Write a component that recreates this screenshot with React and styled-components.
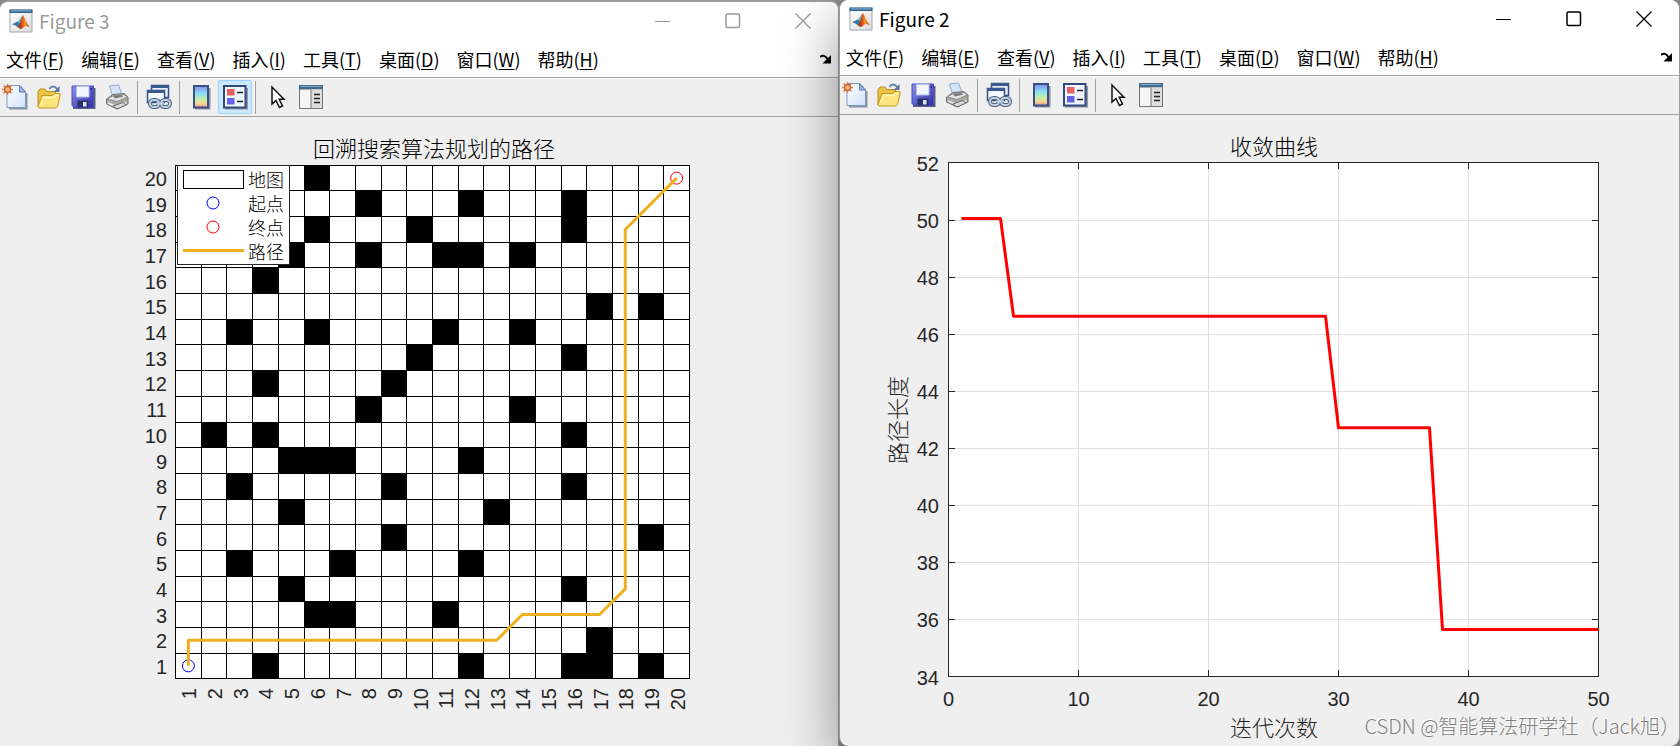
import React from "react";
import styled, { createGlobalStyle } from "styled-components";

const GlobalStyle = createGlobalStyle`
  * {
    box-sizing: border-box;
  }

  body {
    margin: 0;
    background-color: #8c8c8c;
    font-family: "Noto Sans CJK SC", sans-serif;
    overflow-x: hidden;
  }
`;

const Desktop = styled.main`
  position: relative;
  display: grid;
  grid-template-columns: 839fr 841fr;
  min-height: 100vh;
  overflow: hidden;
  background: #8c8c8c;
`;

const Window = styled.section`
  display: flex;
  flex-direction: column;
  min-width: 0;
  overflow: hidden;
  background-color: #efefef;
  color: #000;
  border: 0 solid #9c9c9c;
  border-width: ${({ $active }) => ($active ? "0 1px" : "2px 1px 0 0")};
  border-radius: ${({ $active }) => ($active ? "9px" : "9px 9px 0 0")};
  position: relative;
  z-index: ${({ $active }) => ($active ? 1 : 0)};
  box-shadow: ${({ $active }) =>
    $active ? "0 20px 56px rgba(0, 0, 0, 0.42)" : "none"};
`;

const TitleBar = styled.header`
  display: flex;
  align-items: center;
  height: 38px;
  padding-left: 9px;
  gap: 6px;
  background-color: #fff;
  color: ${({ $active }) => ($active ? "#000" : "#999")};
`;

const Title = styled.h1`
  flex: 1;
  margin: 0;
  font-size: 19px;
  line-height: 24px;
  font-weight: 400;
`;

const WindowButton = styled.button`
  display: flex;
  align-items: center;
  justify-content: center;
  width: 70px;
  height: 38px;
  margin-left: -6px;
  padding: 0;
  border: none;
  background: none;
  color: inherit;

  & + & {
    margin-left: -6px;
  }
`;

const MenuBar = styled.nav`
  display: flex;
  align-items: center;
  gap: 17px;
  height: 38px;
  padding: 1px 6px 0;
  background-color: #fff;
  border-bottom: 1px solid #a0a0a0;
`;

const MenuItem = styled.button`
  padding: 0;
  border: none;
  background: none;
  color: #000;
  font-family: inherit;
  font-size: 18px;
  line-height: 24px;
  font-weight: 400;
  white-space: nowrap;

  u {
    text-underline-offset: 2px;
    text-decoration-thickness: 1px;
  }
`;

const DockButton = styled.button`
  display: flex;
  margin-left: auto;
  padding: 0;
  border: none;
  background: none;
`;

const ToolBar = styled.div`
  display: flex;
  align-items: center;
  height: 39px;
  margin-left: -2px;
  border-bottom: 1px solid #a0a0a0;
  box-shadow: inset 0 1px #fff;
`;

const ToolButton = styled.button`
  display: flex;
  align-items: center;
  justify-content: center;
  width: 34px;
  height: 34px;
  padding: 0;
  border: 1px solid ${({ $pressed }) => ($pressed ? "#99d1ff" : "transparent")};
  border-radius: 2px;
  background-color: ${({ $pressed }) => ($pressed ? "#cce8ff" : "transparent")};
`;

const Separator = styled.span`
  width: 1px;
  height: 33px;
  margin: 0 4px 0 3px;
  background-color: #a0a0a0;
`;

const Chart = styled.svg`
  display: block;
  width: 100%;
  height: auto;
  font-family: "Liberation Sans", "Noto Sans CJK SC", sans-serif;
  font-size: 20px;
  fill: #262626;
`;

const Caption = styled.text`
  font-size: 22px;
  font-weight: 300;
  text-anchor: middle;
  fill: ${({ $dark }) => ($dark ? "#000" : "#262626")};
`;

const LegendText = styled.text`
  font-size: 18px;
  font-weight: 300;
  fill: #000;
`;

const Watermark = styled.p`
  position: absolute;
  right: 0;
  bottom: 6px;
  z-index: 2;
  margin: 0;
  font-size: 20px;
  line-height: 28px;
  font-weight: 300;
  color: #808080;
  text-shadow: -1px -1px #fff;
`;

const MatlabIcon = () => (
  <svg width="24" height="24" viewBox="0 0 24 24">
    <defs>
      <linearGradient id="peak" x1="0" x2="1">
        <stop offset="0" stopColor="#7a1d10" />
        <stop offset="0.45" stopColor="#e8601c" />
        <stop offset="0.65" stopColor="#f59a2c" />
        <stop offset="1" stopColor="#b32d14" />
      </linearGradient>
      <linearGradient id="frame" x1="0" y1="0" x2="1" y2="1">
        <stop offset="0" stopColor="#fff" />
        <stop offset="1" stopColor="#dcdcdc" />
      </linearGradient>
    </defs>
    <rect x="1" y="1" width="22" height="22" fill="url(#frame)" stroke="#a2a8ac" />
    <rect x="0.5" y="0.5" width="23" height="3.5" fill="#336490" />
    <rect x="2" y="1.3" width="20" height="1.2" fill="#7eacc9" />
    <path d="M3 15.2 L8.6 12.6 L11.2 14.6 L8.6 18.2 L6.6 16.4Z" fill="#3477ad" />
    <path d="M8.6 12.6 C10.5 11.8 12 7.5 14 6 L11.2 14.6Z" fill="#56b0c5" />
    <path d="M8.6 18.2 C10.5 16.6 12.2 10 14 6 C16 9 17.8 15 20.6 18 C18.5 17.4 17.4 16.2 15.7 17.5 C14.3 18.6 13.2 20 11.6 20 C10.7 20 10 18.6 8.6 18.2Z" fill="url(#peak)" />
  </svg>
);

const NewIcon = () => (
  <svg width="26" height="26" viewBox="0 0 26 26">
    <defs>
      <linearGradient id="page" x1="0" y1="0" x2="1" y2="1">
        <stop offset="0" stopColor="#fff" />
        <stop offset="1" stopColor="#cfe2fb" />
      </linearGradient>
    </defs>
    <path d="M7 24.5H24.5V9" fill="none" stroke="#8a92a0" strokeWidth="2" />
    <path d="M5 1.5H18L23.5 7.5V23.5H5Z" fill="url(#page)" stroke="#7b97c6" />
    <path d="M17.5 1.5V8H23.5Z" fill="#9cb9e5" stroke="#647eb2" />
    <path d="M5.5 0V11M0 5.5H11M1.5 1.5L9.5 9.5M9.5 1.5L1.5 9.5" stroke="#de8056" strokeWidth="1.3" />
    <circle cx="5.5" cy="5.5" r="3" fill="#f7bc78" stroke="#d35f32" strokeWidth="1.4" />
  </svg>
);

const OpenIcon = () => (
  <svg width="26" height="26" viewBox="0 0 26 26">
    <path d="M2 23V7.5L4 5H9L11 7.5H19.5V11" fill="#eac348" stroke="#b98d1d" />
    <path d="M2 22.5L6 11.5H17L19 9.5H24V12L21.5 22.5L20 24H3Z" fill="#fbe47c" stroke="#c59922" />
    <path d="M5 21L8 13.5H17.5L19.5 11.5H22" fill="none" stroke="#fff6bd" strokeWidth="1.5" />
    <path d="M13.5 5C15 1.8 19 1.5 21 5" fill="none" stroke="#6785a7" strokeWidth="1.8" />
    <path d="M23.5 2V8H17.5Z" fill="#5b7899" />
  </svg>
);

const SaveIcon = () => (
  <svg width="26" height="26" viewBox="0 0 26 26">
    <defs>
      <linearGradient id="disk" x1="0" y1="0" x2="1" y2="1">
        <stop offset="0" stopColor="#8d92ea" />
        <stop offset="1" stopColor="#2c2da4" />
      </linearGradient>
    </defs>
    <path d="M3 24H24.5V4" fill="none" stroke="#5d5f78" strokeWidth="2" />
    <path d="M2 2H23.5V23.5H4L2 21.5Z" fill="url(#disk)" stroke="#4b4ebd" />
    <path d="M6.5 2.5H19V13H6.5Z" fill="#f1f5ff" stroke="#b8c0ef" />
    <path d="M20.5 4H22V6H20.5Z" fill="#22237e" />
    <path d="M7.5 16.5H18.5V23.5H7.5Z" fill="#28306d" />
    <path d="M13 18H16.5V22.5H13Z" fill="#dfe5ef" />
  </svg>
);

const PrintIcon = () => (
  <svg width="26" height="26" viewBox="0 0 26 26">
    <path d="M5.5 2L14.5 1L18.5 12L9 14Z" fill="#d3e5fb" stroke="#91aac9" />
    <path d="M2.5 15L9 10.5L20 9.5L24 13V20L13 25L2.5 20Z" fill="#aaa" stroke="#737373" />
    <path d="M3 15L9.5 11.5L20 10.5L23.5 13L13 17.5Z" fill="#e3e3e3" stroke="#8c8c8c" />
    <path d="M9 12L17.5 11L19 12.5L11 14.5Z" fill="#777" />
    <path d="M4 19L13 22.8L22.5 18.5" fill="none" stroke="#eee" strokeWidth="1.5" />
    <path d="M9 22L19 18.5L22 21L13 25Z" fill="#ddd" stroke="#686868" />
    <circle cx="21.5" cy="15" r="1" fill="#cba14d" />
  </svg>
);

const LinkIcon = () => (
  <svg width="26" height="26" viewBox="0 0 26 26">
    <rect x="5.5" y="1.5" width="17" height="12" fill="#e4edf8" stroke="#344f80" strokeWidth="1.5" />
    <path d="M5 2.5H23" stroke="#39598f" strokeWidth="3" />
    <rect x="1.5" y="6.5" width="17" height="12" fill="#f5f9ff" stroke="#344f80" strokeWidth="1.5" />
    <path d="M1 7.5H19" stroke="#39598f" strokeWidth="3" />
    <g fill="none" stroke="#4d647f" strokeWidth="4">
      <rect x="4" y="16" width="9" height="7" rx="3.5" />
      <rect x="15" y="16" width="9" height="7" rx="3.5" />
      <path d="M10 19.5H18" />
    </g>
    <g fill="none" stroke="#bfd0e4" strokeWidth="2">
      <rect x="4" y="16" width="9" height="7" rx="3.5" />
      <rect x="15" y="16" width="9" height="7" rx="3.5" />
      <path d="M10 19.5H18" />
    </g>
  </svg>
);

const ColorbarIcon = () => (
  <svg width="26" height="26" viewBox="0 0 26 26">
    <defs>
      <linearGradient id="colors" x1="0" y1="0" x2="0" y2="1">
        <stop offset="0" stopColor="#888ced" />
        <stop offset="0.35" stopColor="#8adff0" />
        <stop offset="0.6" stopColor="#bdecb0" />
        <stop offset="0.8" stopColor="#f7dc90" />
        <stop offset="1" stopColor="#ee9292" />
      </linearGradient>
    </defs>
    <path d="M7 24.5H21.5V4" fill="none" stroke="#8f949e" strokeWidth="2" />
    <rect x="6" y="2" width="14" height="21.5" fill="url(#colors)" stroke="#3a4f83" strokeWidth="2" />
  </svg>
);

const LegendIcon = () => (
  <svg width="26" height="26" viewBox="0 0 26 26">
    <path d="M3 24.5H25V4" fill="none" stroke="#8f949e" strokeWidth="2" />
    <rect x="2" y="2" width="21.5" height="21.5" fill="#f2f6ff" stroke="#33487d" strokeWidth="2" />
    <rect x="5" y="5" width="7.5" height="6.5" fill="#e6605f" />
    <rect x="5" y="14" width="7.5" height="6.5" fill="#6563e4" />
    <path d="M15 8.5H21M15 17.5H21" stroke="#222" strokeWidth="1.6" />
  </svg>
);

const CursorIcon = () => (
  <svg width="26" height="26" viewBox="0 0 26 26">
    <path d="M8 3V20L12 16.5L15.5 23.5L18.5 22L15.2 15.3H20Z" fill="#fff" stroke="#111" strokeWidth="1.5" />
  </svg>
);

const InspectorIcon = () => (
  <svg width="26" height="26" viewBox="0 0 26 26">
    <rect x="1.5" y="1.5" width="23" height="23" fill="#f5f5f5" stroke="#777" />
    <rect x="1" y="1" width="24" height="4.5" fill="#426b8b" />
    <path d="M2.5 2.5H23.5" stroke="#86abc5" />
    <rect x="13" y="5.5" width="11" height="18.5" fill="#ddd" />
    <path d="M13 5.5V24" stroke="#777" />
    <path d="M16 10.5H22M16 14.5H22M16 18.5H22" stroke="#222" strokeWidth="1.6" />
  </svg>
);

const DockIcon = () => (
  <svg width="12" height="12" viewBox="0 0 12 12">
    <path d="M0 4C2.5 1.8 5.5 2.5 7.5 6" fill="none" stroke="#000" strokeWidth="2" />
    <path d="M11 2V10.5H2.5Z" fill="#000" />
  </svg>
);

const menus = [
  ["文件", "F"],
  ["编辑", "E"],
  ["查看", "V"],
  ["插入", "I"],
  ["工具", "T"],
  ["桌面", "D"],
  ["窗口", "W"],
  ["帮助", "H"],
];

const FigureWindow = ({ title, active, legendOn, children }) => (
  <Window $active={active}>
    <TitleBar $active={active}>
      <MatlabIcon />
      <Title>{title}</Title>
      <WindowButton aria-label="最小化">
        <svg width="16" height="16" stroke="currentColor">
          <path d="M0 8.5H15" />
        </svg>
      </WindowButton>
      <WindowButton aria-label="最大化">
        <svg width="16" height="16" fill="none" stroke="currentColor" strokeWidth="1.5">
          <rect x="1" y="1" width="13.5" height="13.5" rx="1.5" />
        </svg>
      </WindowButton>
      <WindowButton aria-label="关闭">
        <svg width="16" height="16" stroke="currentColor" strokeWidth="1.2">
          <path d="M0.5 0.5L15.5 15.5M15.5 0.5L0.5 15.5" />
        </svg>
      </WindowButton>
    </TitleBar>
    <MenuBar>
      {menus.map(([name, key]) => (
        <MenuItem key={key}>
          {name}(<u>{key}</u>)
        </MenuItem>
      ))}
      <DockButton aria-label="停靠">
        <DockIcon />
      </DockButton>
    </MenuBar>
    <ToolBar>
      <ToolButton aria-label="新建"><NewIcon /></ToolButton>
      <ToolButton aria-label="打开"><OpenIcon /></ToolButton>
      <ToolButton aria-label="保存"><SaveIcon /></ToolButton>
      <ToolButton aria-label="打印"><PrintIcon /></ToolButton>
      <Separator />
      <ToolButton aria-label="链接"><LinkIcon /></ToolButton>
      <Separator />
      <ToolButton aria-label="颜色栏"><ColorbarIcon /></ToolButton>
      <ToolButton aria-label="图例" $pressed={legendOn}><LegendIcon /></ToolButton>
      <Separator />
      <ToolButton aria-label="编辑绘图"><CursorIcon /></ToolButton>
      <ToolButton aria-label="属性"><InspectorIcon /></ToolButton>
    </ToolBar>
    {children}
  </Window>
);

// blocked columns of the map, keyed by row
const blocked = {
  20: [6],
  19: [8, 12, 16],
  18: [6, 10, 16],
  17: [5, 8, 11, 12, 14],
  16: [4],
  15: [17, 19],
  14: [3, 6, 11, 14],
  13: [10, 16],
  12: [4, 9],
  11: [8, 14],
  10: [2, 4, 16],
  9: [5, 6, 7, 12],
  8: [3, 9, 16],
  7: [5, 13],
  6: [9, 19],
  5: [3, 7, 12],
  4: [5, 16],
  3: [6, 7, 11],
  2: [17],
  1: [4, 12, 16, 17, 19],
};

const route = [[1, 1], [1, 2], [13, 2], [14, 3], [17, 3], [18, 4], [18, 18], [20, 20]];

const MapChart = () => {
  // edges are snapped to whole pixels so that the cells stay sharp
  const edgeX = (i) => Math.round(175 + 25.7 * i);
  const edgeY = (i) => Math.round(47.8 + 25.67 * i);
  const cx = (col) => 175.5 + 25.7 * (col - 0.5);
  const cy = (row) => 48.3 + 25.67 * (20.5 - row);
  const edges = Array.from({ length: 21 }, (_, i) => i);
  const cells = edges.slice(1);

  return (
    <Chart viewBox="0 0 838 629">
      <Caption $dark x="434" y="40">回溯搜索算法规划的路径</Caption>
      <rect x="175" y="48" width="514" height="513" fill="#fff" />
      {edges.map((i) => (
        <path
          key={i}
          d={`M${edgeX(i) + 0.5} 48V562M175 ${edgeY(i) + 0.5}H690`}
          stroke="#000"
        />
      ))}
      {Object.entries(blocked).map(([row, cols]) =>
        cols.map((col) => (
          <rect
            key={`${row}-${col}`}
            x={edgeX(col - 1)}
            y={edgeY(20 - row)}
            width={edgeX(col) - edgeX(col - 1) + 1}
            height={edgeY(21 - row) - edgeY(20 - row) + 1}
            fill="#000"
          />
        ))
      )}
      {cells.map((n) => (
        <React.Fragment key={n}>
          <text x="167" y={Math.round(cy(n) + 8)} textAnchor="end">{n}</text>
          <text
            transform={`translate(${Math.round(cx(n) + 8)} 571) rotate(-90)`}
            textAnchor="end"
          >
            {n}
          </text>
        </React.Fragment>
      ))}
      <circle cx={cx(1)} cy={cy(1)} r="6" fill="none" stroke="#00f" />
      <circle cx={cx(20)} cy={cy(20)} r="6" fill="none" stroke="#f00" />
      <polyline
        points={route.map(([col, row]) => `${cx(col)},${cy(row)}`).join(" ")}
        fill="none"
        stroke="#edb120"
        strokeWidth="3"
        strokeLinejoin="round"
      />
      <g fill="none">
        <rect x="177.5" y="48.5" width="112" height="99" fill="#fff" stroke="#262626" />
        <rect x="183.5" y="53.5" width="60" height="18" stroke="#000" />
        <circle cx="213" cy="86" r="6" stroke="#00f" />
        <circle cx="213" cy="110" r="6" stroke="#f00" />
        <path d="M183 133.5H244" stroke="#edb120" strokeWidth="3" />
      </g>
      <LegendText x="248" y="70">地图</LegendText>
      <LegendText x="248" y="94">起点</LegendText>
      <LegendText x="248" y="118">终点</LegendText>
      <LegendText x="248" y="142">路径</LegendText>
    </Chart>
  );
};

const lengths = [[1, 50.04], [4, 50.04], [5, 46.62], [29, 46.62], [30, 42.71], [37, 42.71], [38, 35.65], [50, 35.65]];

const CurveChart = () => {
  const x = (v) => 108.5 + 13 * v;
  const y = (v) => 47.5 + ((52 - v) * 514) / 18;
  const snap = (v) => Math.round(y(v) - 0.1) + 0.5;
  const xTicks = [0, 10, 20, 30, 40, 50];
  const yTicks = [34, 36, 38, 40, 42, 44, 46, 48, 50, 52];

  return (
    <Chart viewBox="0 0 839 631">
      <Caption $dark x="434" y="40">收敛曲线</Caption>
      <rect x="108.5" y="47.5" width="650" height="514" fill="#fff" />
      {xTicks.map((v) => (
        <React.Fragment key={v}>
          <path d={`M${x(v)} 47.5V561.5`} stroke="#dfdfdf" />
          <text x={x(v)} y="591" textAnchor="middle">{v}</text>
        </React.Fragment>
      ))}
      {yTicks.map((v) => (
        <React.Fragment key={v}>
          <path d={`M108.5 ${snap(v)}H758.5`} stroke="#dfdfdf" />
          <text x="99" y={Math.round(y(v) + 8)} textAnchor="end">{v}</text>
        </React.Fragment>
      ))}
      <g fill="none" stroke="#262626">
        <rect x="108.5" y="47.5" width="650" height="514" />
        {xTicks.map((v) => (
          <path key={v} d={`M${x(v)} 48v6M${x(v)} 561v-6`} />
        ))}
        {yTicks.map((v) => (
          <path key={v} d={`M109 ${snap(v)}h6M758 ${snap(v)}h-6`} />
        ))}
      </g>
      <polyline
        points={lengths.map(([n, len]) => `${x(n)},${y(len)}`).join(" ")}
        fill="none"
        stroke="#f00"
        strokeWidth="3"
        strokeLinejoin="round"
      />
      <Caption x="434" y="621">迭代次数</Caption>
      <Caption transform="translate(66 305) rotate(-90)">路径长度</Caption>
    </Chart>
  );
};

const App = () => {
  return (
    <>
      <GlobalStyle />
      <Desktop>
        <FigureWindow title="Figure 3" legendOn>
          <MapChart />
        </FigureWindow>
        <FigureWindow title="Figure 2" active>
          <CurveChart />
        </FigureWindow>
        <Watermark>CSDN @智能算法研学社（Jack旭）</Watermark>
      </Desktop>
    </>
  );
};

export default App;
